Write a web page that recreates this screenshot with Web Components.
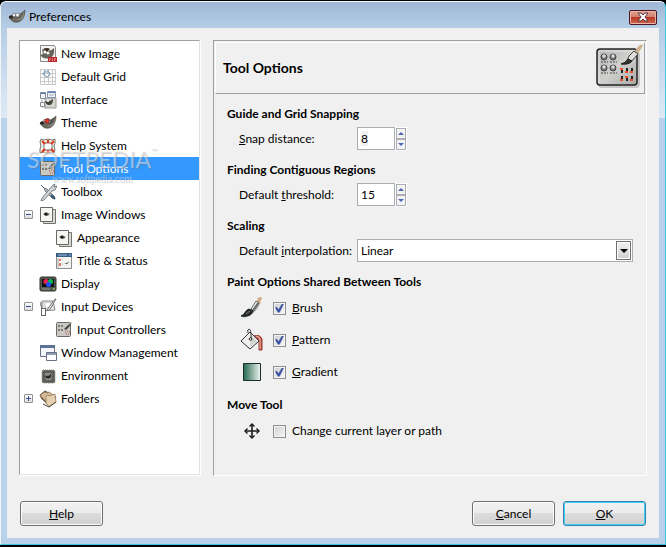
<!DOCTYPE html>
<html lang="en">
<head>
<meta charset="utf-8">
<title>Preferences</title>
<style>
  body {
    margin: 0;
    background: #000;
    color: #000;
    font: 12px/16px "Lato", "Open Sans", sans-serif;
  }
</style>
</head>
<body>
<pref-window>
  <span slot="title">Preferences</span>
  <pref-tree slot="tree">
    <tree-item icon="image">New Image</tree-item>
    <tree-item icon="grid">Default Grid</tree-item>
    <tree-item icon="interface">Interface</tree-item>
    <tree-item icon="theme">Theme</tree-item>
    <tree-item icon="help">Help System</tree-item>
    <tree-item icon="options" selected>Tool Options</tree-item>
    <tree-item icon="toolbox">Toolbox</tree-item>
    <tree-item icon="windows" toggle="open">Image Windows</tree-item>
    <tree-item icon="windows" level="2">Appearance</tree-item>
    <tree-item icon="status" level="2">Title &amp; Status</tree-item>
    <tree-item icon="display">Display</tree-item>
    <tree-item icon="devices" toggle="open">Input Devices</tree-item>
    <tree-item icon="options" level="2">Input Controllers</tree-item>
    <tree-item icon="manage">Window Management</tree-item>
    <tree-item icon="chip">Environment</tree-item>
    <tree-item icon="folders" toggle="closed">Folders</tree-item>
  </pref-tree>
  <option-panel slot="panel">
    <span slot="title">Tool Options</span>
    <option-section>
      <span slot="title">Guide and Grid Snapping</span>
      <spin-field value="8" selected><u>S</u>nap distance:</spin-field>
    </option-section>
    <option-section>
      <span slot="title">Finding Contiguous Regions</span>
      <spin-field value="15">Default <u>t</u>hreshold:</spin-field>
    </option-section>
    <option-section>
      <span slot="title">Scaling</span>
      <choice-field value="Linear">Default <u>i</u>nterpolation:</choice-field>
    </option-section>
    <option-section>
      <span slot="title">Paint Options Shared Between Tools</span>
      <check-field icon="brush" checked><u>B</u>rush</check-field>
      <check-field icon="bucket" checked><u>P</u>attern</check-field>
      <check-field icon="gradient" checked><u>G</u>radient</check-field>
    </option-section>
    <option-section>
      <span slot="title">Move Tool</span>
      <check-field icon="move">Change current layer or path</check-field>
    </option-section>
  </option-panel>
  <push-button slot="help"><u>H</u>elp</push-button>
  <push-button slot="actions"><u>C</u>ancel</push-button>
  <push-button slot="actions" primary><u>O</u>K</push-button>
</pref-window>

<script>
const windowTemplate = document.createElement('template');
windowTemplate.innerHTML = `
  <style>
    :host {
      display: flex;
      flex-direction: column;
      box-sizing: border-box;
      min-height: 100vh;
      padding: 1px 0 2px;
      background: #000;
    }
    .frame {
      flex: 1;
      display: flex;
      flex-direction: column;
      padding: 0 6px 6px;
      border: 1px solid #43c6e4;
      border-top-color: #f4f8fc;
      border-left-color: #f1f6fb;
      border-radius: 6px 6px 0 0;
      background:
        linear-gradient(#a0b8d6, #b6cde6 26px, #dfeaf6 116px, transparent 116px) no-repeat,
        #b9d1ea;
    }
    header {
      display: flex;
      align-items: center;
      gap: 3px;
      height: 26px;
      padding: 4px 2px 0 1px;
      box-sizing: border-box;
    }
    header slot { display: block; flex: 1; }
    .close {
      display: flex;
      align-items: center;
      justify-content: center;
      width: 28px;
      height: 15px;
      padding: 0;
      border: 1px solid #4a1420;
      border-radius: 2px;
      box-shadow: inset 0 0 0 1px #eab5a8;
      background: linear-gradient(#e2a092, #d17f6d 48%, #b93a24 50%, #cf6650);
    }
    .client {
      flex: 1;
      display: flex;
      flex-direction: column;
      padding: 12px;
      background: #f0f0f0;
      gap: 25px;
    }
    main { flex: 1; display: flex; gap: 12px; }
    footer { display: flex; gap: 8px; padding: 0 1px; }
    .spacer { flex: 1; }
  </style>
  <div class="frame">
    <header>
      <pref-icon name="wilber"></pref-icon>
      <slot name="title"></slot>
      <button class="close" aria-label="Close">
        <svg width="12" height="10" viewBox="0 0 12 10">
          <path d="M1 1h3l2 2 2-2h3L8 5l3 4H8L6 7 4 9H1l3-4z" fill="#fff" stroke="#553640" stroke-width="1"/>
        </svg>
      </button>
    </header>
    <div class="client">
      <main>
        <slot name="tree"></slot>
        <slot name="panel"></slot>
      </main>
      <footer>
        <slot name="help"></slot>
        <span class="spacer"></span>
        <slot name="actions"></slot>
      </footer>
    </div>
  </div>
`;

class PrefWindow extends HTMLElement {
  constructor() {
    super();
    this.attachShadow({ mode: 'open' }).appendChild(windowTemplate.content.cloneNode(true));
  }
}

// The animal head is used by several of the icons.
const head = `
  <path d="M1 9c2-2 4-2 6-1 3-1 6-2 10-6 0 5-2 11-7 12-4 1-7-1-9-5z" fill="#6a675c" stroke="#4a4943" stroke-width=".6"/>
  <path d="M8 12c4 0 7-3 8-8 0 6-4 9-8 8z" fill="#aaa899"/>
  <ellipse cx="3" cy="9" rx="2" ry="1.5" fill="#222"/>
  <circle cx="6" cy="7" r="1.8" fill="#eee" stroke="#444" stroke-width=".5"/>
  <circle cx="9.5" cy="7" r="2" fill="#eee" stroke="#444" stroke-width=".5"/>`;

const page = `
  <path d="M4.5 3.5h12v14h-12z" fill="#d8d8d5" stroke="#74746f"/>
  <path d="M1.5 1.5h12v14h-12z" fill="#f5f5f3" stroke="#686863"/>
  <path d="M4 8q3-3 7 0-3 4-7 0z" fill="#777"/>
  <circle cx="7" cy="8" r="1.6" fill="#171717"/>`;

const board = `
  <rect x="1.5" y="1.5" width="14" height="14" rx="1" fill="#c9c8c3" stroke="#6b6a64"/>
  <path d="M3 5h2M6 5h2M4 4v2M7 4v2M3 9h2M6 9h2M4 8v2M7 8v2" stroke="#66645e"/>
  <path d="M9 8l3-3 5-4-3 5-3 3z" fill="#444"/>
  <path d="M10 11h1M12 10h1M14 11h1M11 13h1M13 13h1" stroke="#b44a40"/>`;

const icons = {
  wilber: [18, 18, head],
  theme: [18, 18, head + `<path d="M6 5l3-1 2 2-1 3-3 1-2-2z" fill="#8c3b33"/><circle cx="8" cy="7" r="1.5" fill="#f13127"/><path d="M11 6l5-3-2 6-4 2z" fill="#555"/>`],
  image: [18, 18, `
    <path d="M1.5.5h14l1 2v14h-15z" fill="#f4f4f2" stroke="#888"/>
    <path d="M3 4l4 2q4 1 8-3 1 8-4 10-6 2-10-3l3-1z" fill="#65635b"/>
    <path d="M4 4q4-2 7 0l-3 3z" fill="#3c2c20"/>
    <circle cx="6" cy="7" r="1.5" fill="#fff"/><circle cx="9" cy="8" r="1.5" fill="#fff"/>
    <path d="M9 12h9v5H9z" fill="#b8272c"/>
    <path d="M10 14h2m1 0h1m1 0h2M10 15.5h1m2 0h1m1 0h1" stroke="#eaa4a4"/>`],
  grid: [18, 18, `
    <path d="M1 1h16v16H1z" fill="#fdfdfd"/>
    <path d="M1.5 1v16M5.5 1v16M9.5 1v16M13.5 1v16M16.5 1v16M1 1.5h16M1 5.5h16M1 9.5h16M1 13.5h16M1 16.5h16" stroke="#cacaca"/>
    <path d="M5 4h5l1 3-3 2-3-2zM6 2v2m3-2v2M3 6h2" fill="none" stroke="#779ab5"/>`],
  interface: [18, 18, `
    <path d="M6 7h11v10H6z" fill="#d3d3d0" stroke="#999"/>
    <path d="M1.5 1.5h5v6h-5z" fill="#f5f5f5" stroke="#7d8797"/>
    <path d="M1.5 11.5h4v4h-4z" fill="#f5f5f5" stroke="#888"/>
    <path d="M8.5.5h8v6h-8z" fill="#eef2f8" stroke="#8294ae"/>
    <path d="M9 1.5h7M2 2.5h4" stroke="#5b80b3"/>
    <path d="M10 4h5M3 7v4M3 16h4" stroke="#aaa"/>
    <path d="M6 10q5 1 8-2 0 6-4 6-3 0-4-4z" fill="#44433a"/><circle cx="9" cy="10" r="1" fill="#fff"/>`],
  help: [18, 18, `
    <path d="M2 2l3 1 4-1 4 1 3-1v4l-1 3 1 4-1 3-3-1-4 1-4-1-3 1v-4l1-3-1-4z" fill="#f4f2ef" stroke="#777267"/>
    <path d="M5 6h8v7H5z" fill="#fff" stroke="#777267"/>
    <path d="M3 4l3 3m9-3l-3 3M3 15l3-3m9 3l-3-3M9 3v3m0 7v3" stroke="#d84128" stroke-width="2.4"/>`],
  options: [18, 18, board],
  toolbox: [18, 18, `
    <path d="M2 2l3 3 1 3 8 8 2-2-8-8-3-1z" fill="#b6bec5" stroke="#4d565c" stroke-width=".7"/>
    <path d="M9 8l5-6 2-1-1 3 3-1-2 4-3 1-8 9-3 1 1-3z" fill="#d0d5d7" stroke="#4d565c" stroke-width=".7"/>
    <path d="M12 12l4 4" stroke="#315470" stroke-width="2"/>`],
  windows: [18, 18, page],
  status: [18, 18, `
    <path d="M1.5 1.5h15v15h-15z" fill="#f4f4f1" stroke="#8b8e90"/>
    <path d="M1 1h16v4H1z" fill="#395f87"/>
    <path d="M3 3h9m2 0h2" stroke="#a9bfd5"/>
    <path d="M4 7h2v2H4zm0 4h2v3H4z" fill="#dc7568"/>
    <path d="M3 6v10M7 7h1M7 12h1" stroke="#aaa"/>
    <path d="M9 11q3 1 5-2-1 5-5 2z" fill="#555"/>`],
  display: [18, 18, `
    <rect x="1" y="2" width="16" height="14" rx="1.5" fill="#555750" stroke="#33362f"/>
    <path d="M3 4h12v8H3z" fill="#111"/>
    <circle cx="7" cy="6.5" r="2.6" fill="#ee2054"/><circle cx="11.5" cy="6.5" r="2.6" fill="#05b653"/><circle cx="9.5" cy="9.5" r="2.5" fill="#2350ff"/>
    <path d="M3 14h8" stroke="#92968e"/><path d="M14 14h2" stroke="#b2ec7d"/>`],
  devices: [18, 18, `
    <path d="M3 3h11l2 9-13 1z" fill="#e7e7e4" stroke="#888"/>
    <path d="M5 5l6-1 2 5-6 1z" fill="#fff" stroke="#aaa" stroke-width=".6"/>
    <path d="M17 1l-5 9-3 3-1-1 2-3 6-8z" fill="#d9d9d5" stroke="#555" stroke-width=".7"/>
    <path d="M2 4q-1 3 1 6" fill="none" stroke="#666"/>
    <rect x="2.5" y="10.5" width="4" height="7" fill="#fff" stroke="#666"/>`],
  manage: [18, 18, `
    <path d="M1.5 1.5h14v11h-14z" fill="#f4f6f9" stroke="#687184"/>
    <path d="M1 1h15v3H1z" fill="#5c7294"/>
    <path d="M7.5 8.5h10v8h-10z" fill="#fff" stroke="#687184"/>
    <path d="M8 9h9v2H8z" fill="#8b9bb1"/>`],
  chip: [18, 18, `
    <path d="M4 3h11l1 1v11l-1 1H4l-1-1V4z" fill="#6a6b65" stroke="#82837c" stroke-dasharray="1 1"/>
    <path d="M5 5h9v9H5z" fill="#74756f" stroke="#4b4c47"/>
    <path d="M6 9q4 1 6-2 0 5-3 5-2 0-3-3z" fill="#242522"/><path d="M6 7h5m-4 5h5" stroke="#a5a69e"/>`],
  folders: [18, 18, `
    <path d="M1 5l5-4 9 5-4 10-8-7z" fill="#8a7358" stroke="#5d4b38"/>
    <path d="M1 5l5-3 2 1 2-1 7 5-2 5-4 4z" fill="#d6bd97" stroke="#896e50" stroke-width=".7"/>
    <path d="M7 6l2-1 1 1 6-2 1 8-7 5-3-4z" fill="#e4d0ae" stroke="#85704f" stroke-width=".7"/>
    <path d="M4 14l6 3 7-5" fill="none" stroke="#4c4337"/>`],
  brush: [24, 24, `
    <path d="M3 21l7-2 7-7 3-6" stroke="#bbb" stroke-width="2" fill="none"/>
    <path d="M16 7l2-5q2-2 4 0l-2 5-3 3z" fill="#d3ad8b"/>
    <path d="M11 13l5-8 3 2-5 8z" fill="#ecedea" stroke="#454944" stroke-width=".8"/>
    <path d="M13 14l5-7" stroke="#63675f" stroke-width="1.5"/>
    <path d="M1 20c4-1 4-6 8-7l4 2c-1 4-6 6-12 5z" fill="#252b29" stroke="#151917"/>
    <path d="M6 18l4-3" stroke="#7d8581"/>`],
  bucket: [24, 24, `
    <path d="M14 8q6-2 8 3v11h-3V13q-1-3-4-2z" fill="#c96251" stroke="#8d382b"/>
    <path d="M16 8q4 0 4 4v9" fill="none" stroke="#eaaaa0"/>
    <path d="M10 4l9 9-9 8-9-8z" fill="#efefed" stroke="#30332f"/>
    <path d="M11 7l6 6-7 6z" fill="#d0d2cf"/>
    <path d="M8 5q-1-4 1-4 2 0 2 5v5" fill="none" stroke="#444"/>
    <circle cx="10.5" cy="11" r="1.3" fill="#fff" stroke="#222"/>`],
  gradient: [24, 24, `
    <linearGradient id="green"><stop stop-color="#26684f"/><stop offset="1" stop-color="#f0f5f1"/></linearGradient>
    <path d="M3.5 3.5h17v17h-17z" fill="url(#green)" stroke="#1c2e26"/>`],
  move: [24, 24, `
    <path d="M12 5v14M5 12h14" stroke="#1b1b1b" stroke-width="1.6"/>
    <path d="M9.5 7.5L12 5l2.5 2.5M9.5 16.5L12 19l2.5-2.5M7.5 9.5L5 12l2.5 2.5M16.5 9.5L19 12l-2.5 2.5" fill="none" stroke="#1b1b1b" stroke-width="1.4"/>`],
  tools: [48, 48, `
    <linearGradient id="plate" x2="1" y2="1"><stop stop-color="#b2b2b1"/><stop offset=".5" stop-color="#d0d0ce"/><stop offset="1" stop-color="#a8a8a7"/></linearGradient>
    <rect x="3" y="7" width="42" height="37" rx="4" fill="#aaa" opacity=".6"/>
    <rect x="2" y="5" width="40" height="36" rx="3" fill="url(#plate)" stroke="#242424" stroke-width="1.5"/>
    <path d="M4 39V7h36" fill="none" stroke="#e8e8e7"/>
    <g fill="#777" stroke="#454545">
      <circle cx="9" cy="13" r="3"/><circle cx="18" cy="13" r="3"/><circle cx="9" cy="24" r="3"/><circle cx="18" cy="24" r="3"/>
    </g>
    <g fill="#ddd"><circle cx="9" cy="12" r="1.7"/><circle cx="18" cy="12" r="1.7"/><circle cx="9" cy="23" r="1.7"/><circle cx="18" cy="23" r="1.7"/></g>
    <path d="M6 18h7m2 0h7M6 29h7m2 0h7" stroke="#444" stroke-dasharray="2 1"/>
    <path d="M27 24v5m5-5v5m5-5v5m-10 3v5m5-5v5m5-5v5" stroke="#222" stroke-width="2"/>
    <path d="M25 25h3m2 3h3m2 0h3M25 36h3m2-3h3m2 3h3" stroke="#ed512e" stroke-width="2"/>
    <path d="M38 9l5-6q2-3 5-2-1 3-4 7l-3 4z" fill="#ceb08f"/>
    <path d="M34 12l5-5 4 3-7 8-4-1z" fill="#dededb" stroke="#41423f"/>
    <path d="M26 20q5-1 7-5l4 2q-3 4-11 3z" fill="#333" stroke="#191919"/>`]
};

class PrefIcon extends HTMLElement {
  static observedAttributes = ['name'];

  constructor() {
    super();
    this.attachShadow({ mode: 'open' });
  }

  attributeChangedCallback() {
    const [width, height, shapes] = icons[this.getAttribute('name')];
    this.shadowRoot.innerHTML = `
      <style>
        :host { display: block; flex: none; }
        svg { display: block; }
      </style>
      <svg width="${width}" height="${height}" viewBox="0 0 ${width} ${height}" fill="none" aria-hidden="true">${shapes}</svg>
    `;
  }
}

class PrefTree extends HTMLElement {
  constructor() {
    super();
    this.attachShadow({ mode: 'open' }).innerHTML = `
      <style>
        :host {
          display: block;
          position: relative;
          flex: none;
          width: 179px;
          padding: 1px 0;
          border: 1px solid;
          border-color: #a0a0a0 #e3e3e3 #e3e3e3 #a0a0a0;
          box-shadow: 1px 1px #fff;
          margin: 0 1px 1px 0;
          background: #fff;
        }
        .mark {
          position: absolute;
          top: 106px;
          left: 7px;
          display: grid;
          justify-items: center;
          gap: 1px;
          color: rgba(255, 255, 255, .45);
          text-shadow: 1px 1px 1px rgba(110, 110, 110, .4);
          pointer-events: none;
        }
        .mark div { display: flex; font: 23px/24px "Lato", sans-serif; }
        .mark sup { font-size: 8px; line-height: 8px; }
        .mark span { font: 10px/14px "Liberation Serif", serif; }
      </style>
      <div role="tree" aria-label="Categories"><slot></slot></div>
      <div class="mark"><div>SOFTPEDIA<sup>™</sup></div><span>www.softpedia.com</span></div>
    `;
  }
}

const itemTemplate = document.createElement('template');
itemTemplate.innerHTML = `
  <style>
    :host {
      display: flex;
      align-items: center;
      gap: 4px;
      height: 23px;
      padding-left: 4px;
    }
    :host([level="2"]) { padding-left: 20px; }
    :host([selected]) { background: #3399ff; color: #fff; }
    .toggle {
      box-sizing: border-box;
      width: 9px;
      height: 9px;
      margin-right: 2px;
      padding: 0;
      border: 1px solid #919191;
      border-radius: 1px;
      background:
        linear-gradient(#35508f, #35508f) center / 5px 1px no-repeat,
        linear-gradient(#fff, #ddd);
    }
    .toggle.closed {
      background:
        linear-gradient(#35508f, #35508f) center / 5px 1px no-repeat,
        linear-gradient(#35508f, #35508f) center / 1px 5px no-repeat,
        linear-gradient(#fff, #ddd);
    }
    .toggle.none { visibility: hidden; }
    .text { white-space: nowrap; }
  </style>
  <button class="toggle" aria-label="Toggle"></button>
  <pref-icon></pref-icon>
  <span class="text"><slot></slot></span>
`;

class TreeItem extends HTMLElement {
  constructor() {
    super();
    this.attachShadow({ mode: 'open' }).appendChild(itemTemplate.content.cloneNode(true));
    this.shadowRoot.querySelector('pref-icon').setAttribute('name', this.getAttribute('icon'));
    this.toggle = this.shadowRoot.querySelector('.toggle');
    this.toggle.classList.add(this.getAttribute('toggle') || 'none');
    this.toggle.addEventListener('click', this.handleToggle.bind(this));
  }

  connectedCallback() {
    this.setAttribute('role', 'treeitem');
    this.setAttribute('aria-level', this.getAttribute('level') || '1');
  }

  handleToggle() {
    const closed = this.toggle.classList.toggle('closed');
    let next = this.nextElementSibling;
    while (next && next.getAttribute('level') === '2') {
      next.style.display = closed ? 'none' : '';
      next = next.nextElementSibling;
    }
  }
}

class OptionPanel extends HTMLElement {
  constructor() {
    super();
    this.attachShadow({ mode: 'open' }).innerHTML = `
      <style>
        :host {
          display: block;
          flex: 1;
          padding: 1px;
          border: 1px solid;
          border-color: #a0a0a0 #fff #fff #a0a0a0;
        }
        header {
          display: flex;
          align-items: center;
          justify-content: space-between;
          padding: 1px 1px 1px 7px;
          border: 1px solid;
          border-color: #fff #a0a0a0 #a0a0a0 #fff;
        }
        h1 { margin: 0; font-size: 14px; line-height: 20px; }
        .sections {
          display: flex;
          flex-direction: column;
          gap: 12px;
          padding: 12px;
        }
      </style>
      <header><h1><slot name="title"></slot></h1><pref-icon name="tools"></pref-icon></header>
      <div class="sections"><slot></slot></div>
    `;
  }
}

class OptionSection extends HTMLElement {
  constructor() {
    super();
    this.attachShadow({ mode: 'open' }).innerHTML = `
      <style>
        :host { display: block; }
        h2 { margin: 0 0 5px; font-size: 12px; line-height: 16px; }
        .rows { display: grid; gap: 6px; padding-left: 12px; }
      </style>
      <h2><slot name="title"></slot></h2>
      <div class="rows"><slot></slot></div>
    `;
  }
}

const fieldStyles = `
  :host { display: grid; grid-template-columns: 118px 1fr; align-items: center; }
  label { white-space: nowrap; }
  input, select {
    box-sizing: border-box;
    height: 23px;
    margin: 0;
    border: 1px solid #abadb3;
    border-radius: 0;
    background: #fff;
    color: #000;
    font: inherit;
  }
`;

class SpinField extends HTMLElement {
  constructor() {
    super();
    this.attachShadow({ mode: 'open' }).innerHTML = `
      <style>
        ${fieldStyles}
        .spin { display: flex; align-items: center; gap: 1px; }
        input { width: 38px; padding: 0 3px; }
        :host([selected]) input {
          background: linear-gradient(#f0f0f0, #f0f0f0) 3px center / 7px 15px no-repeat, #fff;
        }
        .arrows { display: grid; box-shadow: 0 0 0 1px #fff; }
        .arrows button {
          display: flex;
          align-items: center;
          justify-content: center;
          width: 10px;
          height: 11px;
          padding: 0;
          border: 1px solid #abadb3;
          background: #f3f3f3;
        }
      </style>
      <label for="value"><slot></slot></label>
      <div class="spin">
        <input id="value" type="text" inputmode="numeric">
        <div class="arrows">
          <button aria-label="Increase"><svg width="6" height="3"><path d="M0 3l3-3 3 3z" fill="#4d65b5"/></svg></button>
          <button aria-label="Decrease"><svg width="6" height="3"><path d="M0 0l3 3 3-3z" fill="#4d65b5"/></svg></button>
        </div>
      </div>
    `;
    this.input = this.shadowRoot.querySelector('input');
    this.input.value = this.getAttribute('value');
    const [up, down] = this.shadowRoot.querySelectorAll('button');
    up.addEventListener('click', () => this.step(1));
    down.addEventListener('click', () => this.step(-1));
  }

  step(amount) {
    this.input.value = Math.max(0, Number(this.input.value) + amount);
  }
}

class ChoiceField extends HTMLElement {
  constructor() {
    super();
    this.attachShadow({ mode: 'open' }).innerHTML = `
      <style>
        ${fieldStyles}
        .choice { display: grid; }
        .choice > * { grid-area: 1 / 1; }
        select { appearance: none; width: 100%; padding: 0 22px 0 3px; }
        .arrow {
          display: flex;
          align-items: center;
          justify-content: center;
          justify-self: end;
          align-self: center;
          box-sizing: border-box;
          width: 15px;
          height: 19px;
          margin-right: 2px;
          border: 1px solid #707070;
          box-shadow: inset 0 0 0 1px #fff;
          background: linear-gradient(#f2f2f2, #cfcfcf);
          pointer-events: none;
        }
      </style>
      <label for="value"><slot></slot></label>
      <div class="choice">
        <select id="value"><option>${this.getAttribute('value')}</option></select>
        <span class="arrow"><svg width="8" height="4"><path d="M0 0h8L4 4z" fill="#000"/></svg></span>
      </div>
    `;
  }
}

class CheckField extends HTMLElement {
  constructor() {
    super();
    this.attachShadow({ mode: 'open' }).innerHTML = `
      <style>
        :host { display: flex; align-items: center; height: 26px; padding-left: 1px; }
        input {
          appearance: none;
          box-sizing: border-box;
          display: grid;
          place-items: center;
          width: 13px;
          height: 13px;
          margin: 0 6px 0 9px;
          border: 1px solid #8e8f8f;
          background: linear-gradient(135deg, #cdd0d4, #f6f6f6);
          box-shadow: inset 0 0 0 1px #f4f4f4;
        }
        input:checked::before {
          content: "";
          width: 9px;
          height: 9px;
          background: #3d54a0;
          clip-path: polygon(0 45%, 22% 40%, 40% 65%, 78% 0, 100% 0, 52% 100%, 32% 100%);
        }
      </style>
      <pref-icon name="${this.getAttribute('icon')}"></pref-icon>
      <input id="check" type="checkbox">
      <label for="check"><slot></slot></label>
    `;
    this.shadowRoot.querySelector('input').checked = this.hasAttribute('checked');
  }
}

class PushButton extends HTMLElement {
  constructor() {
    super();
    this.attachShadow({ mode: 'open' }).innerHTML = `
      <style>
        :host { display: block; }
        button {
          width: 83px;
          height: 25px;
          padding: 0;
          border: 1px solid #707070;
          border-radius: 3px;
          box-shadow: inset 0 0 0 1px #fbfbfb;
          background: linear-gradient(#f2f2f2, #ebebeb 48%, #dddddd 50%, #cfcfcf);
          color: inherit;
          font: inherit;
        }
        :host([primary]) button {
          border-color: #3c7fb1;
          box-shadow: inset 0 0 0 1px #43d0f5;
        }
      </style>
      <button><slot></slot></button>
    `;
  }
}

customElements.define('pref-icon', PrefIcon);
customElements.define('pref-window', PrefWindow);
customElements.define('pref-tree', PrefTree);
customElements.define('tree-item', TreeItem);
customElements.define('option-panel', OptionPanel);
customElements.define('option-section', OptionSection);
customElements.define('spin-field', SpinField);
customElements.define('choice-field', ChoiceField);
customElements.define('check-field', CheckField);
customElements.define('push-button', PushButton);
</script>
</body>
</html>
